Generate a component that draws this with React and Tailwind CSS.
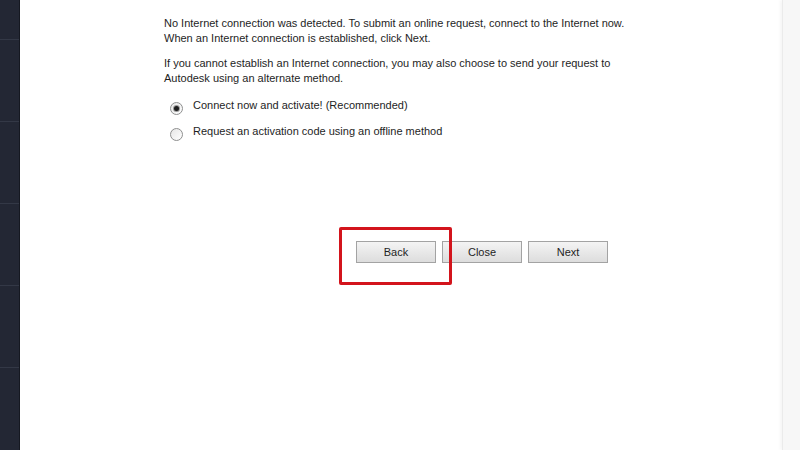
import React from "react";

function Radio({ checked }) {
  return (
    <span className="mt-[4px] flex h-[13px] w-[13px] shrink-0 items-center justify-center rounded-full border border-[#8e8f8f] bg-gradient-to-br from-[#e6e6e6] to-[#ffffff]">
      {checked && <span className="h-[5px] w-[5px] rounded-full bg-[#1c1c1c] ring-1 ring-[#9a9a9a]" />}
    </span>
  );
}

function Btn({ children }) {
  return (
    <button className="h-[22px] w-[80px] border border-[#a3a3a3] bg-gradient-to-b from-[#f4f4f4] to-[#dddddd] text-[11px] leading-none text-[#1f1f1f]">
      {children}
    </button>
  );
}

export default function App() {
  return (
    <div
      className="flex h-[450px] w-[800px] overflow-hidden bg-white"
      style={{ fontFamily: '"Liberation Sans", Arial, sans-serif' }}
    >
      {/* left dark rail */}
      <div className="flex w-[20px] shrink-0 flex-col border-r border-[#151821] bg-[#232734]">
        <div className="h-[40px] border-b border-[#333846]" />
        <div className="h-[82px] border-b border-[#333846]" />
        <div className="h-[82px] border-b border-[#333846]" />
        <div className="h-[82px] border-b border-[#333846]" />
        <div className="h-[82px] border-b border-[#333846]" />
        <div className="flex-1" />
      </div>

      {/* dialog body */}
      <div className="flex-1 pl-[144px] pt-[16px] text-[11px] leading-[15px] text-[#1e1e1e]">
        <p>
          No Internet connection was detected. To submit an online request, connect to the Internet now.
          <br />
          When an Internet connection is established, click Next.
        </p>
        <p className="mt-[10px]">
          If you cannot establish an Internet connection, you may also choose to send your request to
          <br />
          Autodesk using an alternate method.
        </p>

        <div className="mt-[12px] flex flex-col gap-[11px] pl-[6px]">
          <label className="flex h-[15px] items-start gap-[10px]">
            <Radio checked />
            <span>Connect now and activate! (Recommended)</span>
          </label>
          <label className="flex h-[15px] items-start gap-[10px]">
            <Radio />
            <span>Request an activation code using an offline method</span>
          </label>
        </div>

        <div className="relative ml-[192px] mt-[102px] flex gap-[6px]">
          <Btn>Back</Btn>
          <Btn>Close</Btn>
          <Btn>Next</Btn>
          <div className="pointer-events-none absolute left-[-17px] top-[-14px] h-[58px] w-[113px] rounded-[2px] border-[3px] border-[#d3141c]" />
        </div>
      </div>

      {/* right edge */}
      <div className="w-[18px] shrink-0 border-l border-[#ebebeb] bg-[#f7f7f7] shadow-[-2px_0_3px_rgba(0,0,0,0.04)]" />
    </div>
  );
}
